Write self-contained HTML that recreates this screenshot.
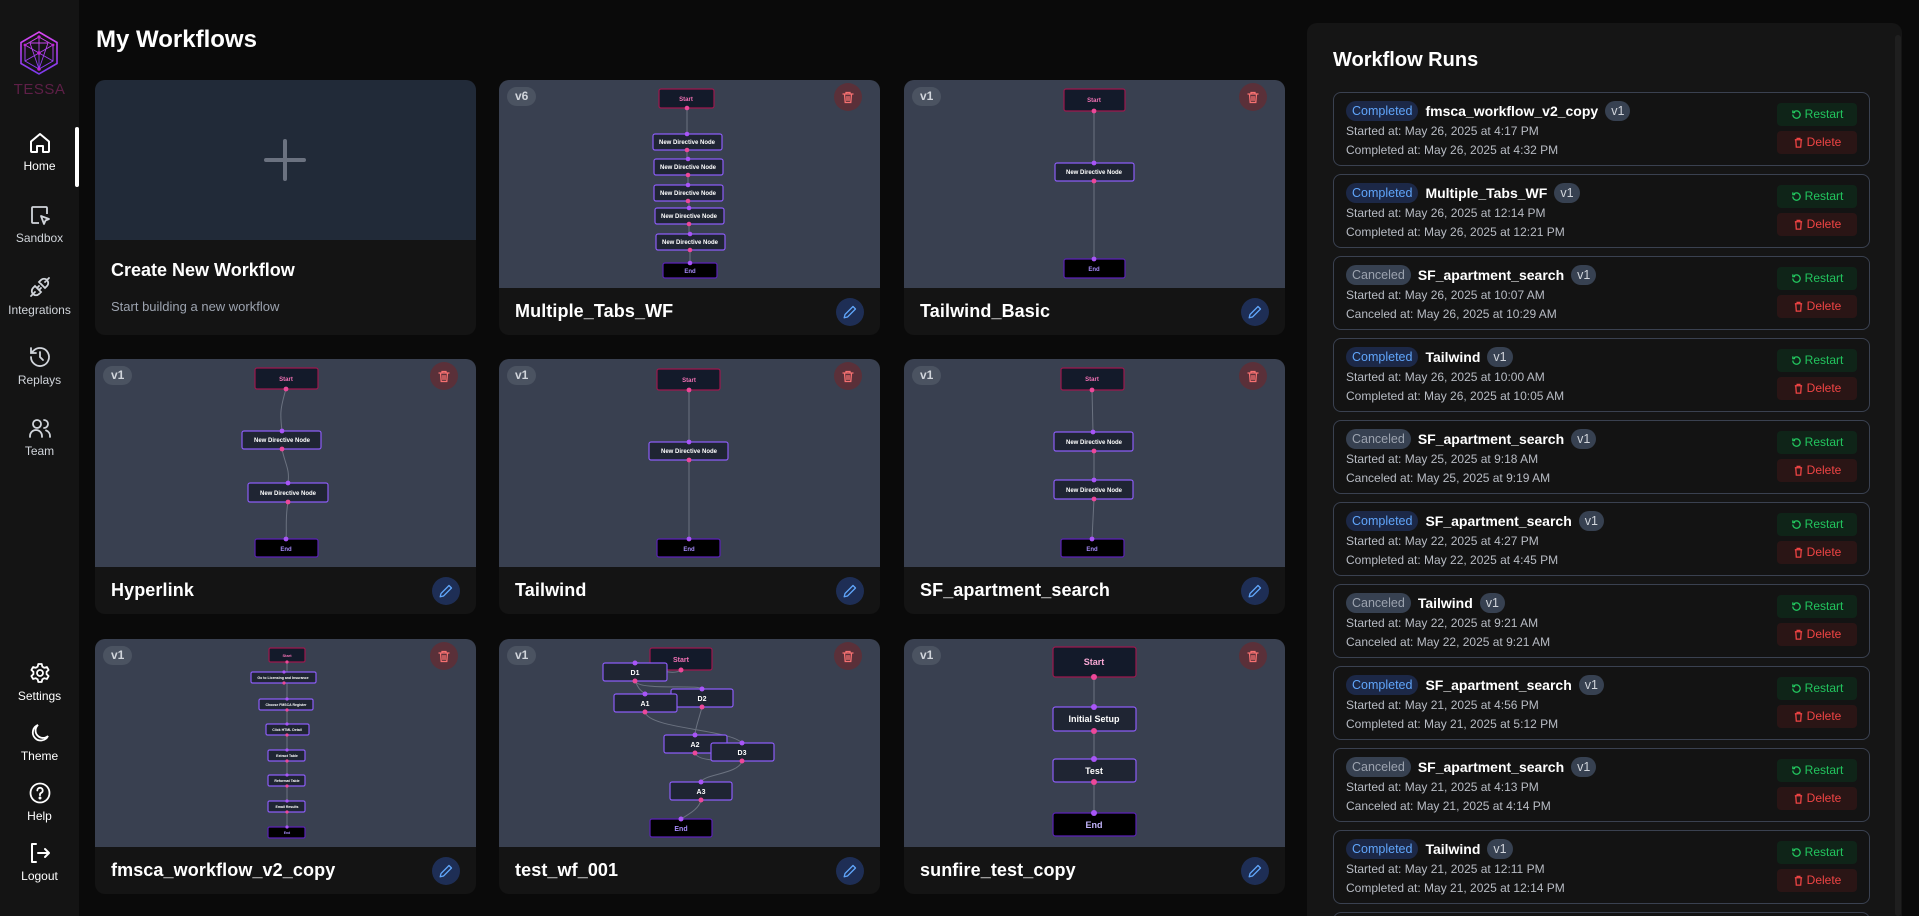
<!DOCTYPE html>
<html style="width:1919px;height:916px;overflow:hidden"><head><meta charset="utf-8">
<style>
*{box-sizing:border-box;margin:0;padding:0}
body{width:1919px;height:916px;overflow:hidden;background:#0a0a0a;font-family:"Liberation Sans",sans-serif;color:#fff;position:relative}
.side{position:absolute;left:0;top:0;width:79px;height:916px;background:#141414}
.nav{position:absolute;left:0;width:79px;text-align:center;font-size:12px;color:#d1d5db}
.nav svg{display:block;margin:0 auto 4px}
.bar{position:absolute;left:75px;top:127px;width:4px;height:60px;background:#fff;border-radius:2px}
h1{position:absolute;left:96px;top:26px;font-size:24px;font-weight:bold}
.card{position:absolute;width:381px;height:255px;border-radius:10px;background:#141414;overflow:hidden}
.pv{position:absolute;left:0;top:0;width:381px;height:208px;background:#394050}
.pv svg{position:absolute;left:0;top:0}
.ft{position:absolute;left:16px;top:221px;font-size:18px;font-weight:bold;letter-spacing:0.1px}
.ver{position:absolute;left:8px;top:7px;height:19px;padding:0 8px;border-radius:10px;background:#4b5361;color:#d1d5db;font-size:12px;font-weight:bold;line-height:19px}
.del{position:absolute;left:335px;top:3px;width:28px;height:28px;border-radius:50%;background:#5a3039}
.edit{position:absolute;left:337px;top:218px;width:28px;height:28px;border-radius:50%;background:#1e2e55}
.del svg,.edit svg{position:absolute;left:7px;top:7px}
.panel{position:absolute;left:1307px;top:23px;width:595px;height:893px;background:#151515;border-radius:10px 10px 0 0;overflow:hidden}
.sb{position:absolute;left:1895px;top:35px;width:6px;height:881px;background:#1f1f1f;border-radius:3px}
.panel h2{position:absolute;left:26px;top:26px;font-size:20px;font-weight:bold}
.run{position:absolute;left:26px;width:537px;height:74px;border:1px solid #3a4150;border-radius:8px;background:#131313}
.hd{position:absolute;left:12px;top:8px;height:20px;display:flex;align-items:center;gap:7px;white-space:nowrap}
.st{height:20px;line-height:20px;padding:0 6px;border-radius:10px;font-size:12.5px}
.cp{background:#1c2847;color:#60a5fa}
.cn{background:#374151;color:#9ca3af}
.nm{font-size:14px;font-weight:bold;color:#fff}
.v1{height:20px;line-height:20px;padding:0 6px;border-radius:10px;background:#374151;color:#d1d5db;font-size:12.5px}
.ln{position:absolute;left:12px;font-size:12px;color:#b8bcc4;white-space:nowrap}
.bt{position:absolute;left:443px;width:80px;height:23px;border-radius:4px;font-size:12px;line-height:23px;text-align:center}
.rs{top:10px;background:#0f2418;color:#22c55e}
.dl{top:38px;background:#2a1515;color:#ef4444}
.bt svg{vertical-align:-2px;margin-right:3px}
text{font-family:"Liberation Sans",sans-serif;font-weight:bold}
</style></head><body>
<div class="side">
 <svg style="position:absolute;left:18px;top:30px" width="42" height="46" viewBox="0 0 42 46">
  <defs><linearGradient id="lg" x1="0" y1="0" x2="0" y2="1"><stop offset="0" stop-color="#d946ef"/><stop offset="1" stop-color="#7c3aed"/></linearGradient></defs>
  <g fill="none" stroke="url(#lg)" stroke-width="1.6">
   <polygon points="21,2 39,12.5 39,33.5 21,44 3,33.5 3,12.5"/>
   <polygon points="21,7 35,15 35,31 21,39 7,31 7,15" stroke-width="1"/>
   <path d="M21,7 L21,23 M7,15 L21,23 L35,15 M7,31 L21,23 L35,31 M21,39 L21,23 M12,13 L30,13 M12,13 L21,39 M30,13 L21,39" stroke-width="0.9"/>
  </g>
  <g fill="#c026d3"><circle cx="21" cy="7" r="1.6"/><circle cx="21" cy="23" r="1.8"/><circle cx="21" cy="39" r="1.8"/><circle cx="7" cy="15" r="1.4"/><circle cx="35" cy="15" r="1.4"/></g>
 </svg>
 <div style="position:absolute;left:0;top:81px;width:79px;text-align:center;font-size:15px;color:#5e1f47;letter-spacing:0.5px">TESSA</div>
 <div class="bar"></div>
 <div class="nav" style="top:131px;color:#fff"><svg width="24" height="24" viewBox="0 0 24 24" fill="none" stroke="#fff" stroke-width="2" stroke-linejoin="round"><path d="M3 10.5L12 3l9 7.5V20a1 1 0 0 1-1 1h-5v-6h-6v6H4a1 1 0 0 1-1-1z"/></svg>Home</div>
 <div class="nav" style="top:203px"><svg width="24" height="24" viewBox="0 0 24 24" fill="none" stroke="#d1d5db" stroke-width="1.8" stroke-linejoin="round"><path d="M11 20H5a1 1 0 0 1-1-1V5a1 1 0 0 1 1-1h13a1 1 0 0 1 1 1v6"/><path d="M13 13l8 3-3.5 1.5L16 21z"/></svg>Sandbox</div>
 <div class="nav" style="top:275px"><svg width="24" height="24" viewBox="0 0 24 24" fill="none" stroke="#d1d5db" stroke-width="1.8" stroke-linecap="round"><path d="M3 21l4-4M21 3l-4 4M7 11l6 6-2 2a4 4 0 0 1-6-6zM17 13l-6-6 2-2a4 4 0 0 1 6 6zM9 13l2-2M11 15l2-2"/></svg>Integrations</div>
 <div class="nav" style="top:345px"><svg width="24" height="24" viewBox="0 0 24 24" fill="none" stroke="#d1d5db" stroke-width="1.8" stroke-linecap="round"><path d="M3 12a9 9 0 1 0 3-6.7L3 8M3 3v5h5M12 7v5l3 3"/></svg>Replays</div>
 <div class="nav" style="top:416px"><svg width="24" height="24" viewBox="0 0 24 24" fill="none" stroke="#d1d5db" stroke-width="1.8" stroke-linecap="round"><circle cx="9" cy="8" r="4"/><path d="M2 21v-1a6 6 0 0 1 12 0v1M16 4a4 4 0 0 1 0 8M22 21v-1a6 6 0 0 0-4-5.6"/></svg>Team</div>
 <div class="nav" style="top:661px;color:#fff"><svg width="24" height="24" viewBox="0 0 24 24" fill="none" stroke="#fff" stroke-width="1.8" stroke-linejoin="round"><circle cx="12" cy="12" r="3"/><path d="M10.3 3h3.4l.6 2.6 2 1.2 2.6-.8 1.7 3-2 1.8v2.4l2 1.8-1.7 3-2.6-.8-2 1.2-.6 2.6h-3.4l-.6-2.6-2-1.2-2.6.8-1.7-3 2-1.8v-2.4l-2-1.8 1.7-3 2.6.8 2-1.2z"/></svg>Settings</div>
 <div class="nav" style="top:721px;color:#fff"><svg width="24" height="24" viewBox="0 0 24 24" fill="none" stroke="#fff" stroke-width="1.8"><path d="M20 15A8 8 0 1 1 10 4a7 7 0 0 0 10 11z"/></svg>Theme</div>
 <div class="nav" style="top:781px;color:#fff"><svg width="24" height="24" viewBox="0 0 24 24" fill="none" stroke="#fff" stroke-width="1.8" stroke-linecap="round"><circle cx="12" cy="12" r="9.5"/><path d="M9.3 9.5a2.7 2.7 0 1 1 3.7 2.5c-.7.3-1 .9-1 1.6v.6"/><circle cx="12" cy="17" r=".6" fill="#fff"/></svg>Help</div>
 <div class="nav" style="top:841px;color:#fff"><svg width="24" height="24" viewBox="0 0 24 24" fill="none" stroke="#fff" stroke-width="2" stroke-linecap="round" stroke-linejoin="round"><path d="M8 3H4v18h4M10 12h11M17 8l4 4-4 4"/></svg>Logout</div>
</div>

<h1>My Workflows</h1>

<div class="card" style="left:95px;top:80px">
 <div class="pv" style="height:160px;background:#212a38"></div>
 <svg style="position:absolute;left:169px;top:59px" width="42" height="42"><path d="M21 2v38M2 21h38" stroke="#6b7280" stroke-width="4" stroke-linecap="round"/></svg>
 <div style="position:absolute;left:16px;top:180px;font-size:18px;font-weight:bold">Create New Workflow</div>
 <div style="position:absolute;left:16px;top:219px;font-size:13px;color:#9ca3af">Start building a new workflow</div>
</div>

<svg width="0" height="0" style="position:absolute"><defs>
<style>.s{fill:#131a2a;stroke:#9d174d;stroke-width:1.2}.d{fill:#1f2533;stroke:#8b5cf6;stroke-width:1.2}.e{fill:#000;stroke:#5b21b6;stroke-width:1.2}.ed{stroke:#6b7280;stroke-width:1;fill:none}.hp{fill:#ec4899}.hu{fill:#a855f7}.t{fill:#fff;font-size:6px}.ts{fill:#f472b6;font-size:6px}.te{fill:#a78bfa;font-size:6px}</style>
<g id="tr"><path d="M2 4h10M5 4V2.5h4V4M3.5 4l.7 8.5h5.6l.7-8.5M6 6.5v4M8 6.5v4" fill="none" stroke="#f87171" stroke-width="1.3" stroke-linecap="round"/></g>
<g id="pn"><path d="M10 1.5l2.5 2.5-8 8-3.3.8.8-3.3z" fill="none" stroke="#60a5fa" stroke-width="1.3" stroke-linejoin="round"/></g>
</defs></svg>

<div class="card" style="left:499px;top:80px"><div class="pv"><svg width="381" height="208">
<path class="ed" d="M188 28L188 54M188 70V79M189 95V105M190 121V128M190 144V154M191 170V183"/>
<rect class="s" x="160" y="9" width="55" height="19" rx="2"/><text class="ts" x="187" y="21" text-anchor="middle">Start</text>
<rect class="d" x="154" y="54" width="69" height="16" rx="2"/><text class="t" x="188" y="64" text-anchor="middle">New Directive Node</text>
<rect class="d" x="155" y="79" width="69" height="16" rx="2"/><text class="t" x="189" y="89" text-anchor="middle">New Directive Node</text>
<rect class="d" x="155" y="105" width="69" height="16" rx="2"/><text class="t" x="189" y="115" text-anchor="middle">New Directive Node</text>
<rect class="d" x="156" y="128" width="69" height="16" rx="2"/><text class="t" x="190" y="138" text-anchor="middle">New Directive Node</text>
<rect class="d" x="157" y="154" width="69" height="16" rx="2"/><text class="t" x="191" y="164" text-anchor="middle">New Directive Node</text>
<rect class="e" x="164" y="183" width="54" height="15" rx="2"/><text class="te" x="191" y="193" text-anchor="middle">End</text>
<g class="hp"><circle cx="188" cy="28" r="2.3"/><circle cx="188" cy="70" r="2.3"/><circle cx="189" cy="95" r="2.3"/><circle cx="189" cy="121" r="2.3"/><circle cx="190" cy="144" r="2.3"/><circle cx="191" cy="170" r="2.3"/></g>
<g class="hu"><circle cx="188" cy="54" r="2.3"/><circle cx="189" cy="79" r="2.3"/><circle cx="189" cy="105" r="2.3"/><circle cx="190" cy="128" r="2.3"/><circle cx="191" cy="154" r="2.3"/><circle cx="191" cy="183" r="2.3"/></g>
</svg><div class="ver">v6</div><div class="del"><svg width="14" height="14"><use href="#tr"/></svg></div></div>
<div class="ft">Multiple_Tabs_WF</div><div class="edit"><svg width="14" height="14"><use href="#pn"/></svg></div></div>

<div class="card" style="left:904px;top:80px"><div class="pv"><svg width="381" height="208">
<path class="ed" d="M190 31V83M190 101V179"/>
<rect class="s" x="160" y="9" width="61" height="22" rx="2"/><text class="ts" x="190" y="22" text-anchor="middle">Start</text>
<rect class="d" x="151" y="83" width="79" height="18" rx="2"/><text class="t" x="190" y="94" text-anchor="middle">New Directive Node</text>
<rect class="e" x="160" y="179" width="61" height="19" rx="2"/><text class="te" x="190" y="191" text-anchor="middle">End</text>
<g class="hp"><circle cx="190" cy="31" r="2.4"/><circle cx="190" cy="101" r="2.4"/></g><g class="hu"><circle cx="190" cy="83" r="2.4"/><circle cx="190" cy="179" r="2.4"/></g>
</svg><div class="ver">v1</div><div class="del"><svg width="14" height="14"><use href="#tr"/></svg></div></div>
<div class="ft">Tailwind_Basic</div><div class="edit"><svg width="14" height="14"><use href="#pn"/></svg></div></div>

<div class="card" style="left:95px;top:359px"><div class="pv"><svg width="381" height="208">
<path class="ed" d="M191 30C185 50 185 55 187 72M187 90C190 105 195 110 193 124M193 143C190 160 192 170 191 180"/>
<rect class="s" x="160" y="9" width="63" height="21" rx="2"/><text class="ts" x="191" y="22" text-anchor="middle">Start</text>
<rect class="d" x="147" y="72" width="79" height="18" rx="2"/><text class="t" x="187" y="83" text-anchor="middle">New Directive Node</text>
<rect class="d" x="153" y="124" width="80" height="19" rx="2"/><text class="t" x="193" y="136" text-anchor="middle">New Directive Node</text>
<rect class="e" x="160" y="180" width="63" height="18" rx="2"/><text class="te" x="191" y="192" text-anchor="middle">End</text>
<g class="hp"><circle cx="191" cy="30" r="2.4"/><circle cx="187" cy="90" r="2.4"/><circle cx="193" cy="143" r="2.4"/></g><g class="hu"><circle cx="187" cy="72" r="2.4"/><circle cx="193" cy="124" r="2.4"/><circle cx="191" cy="180" r="2.4"/></g>
</svg><div class="ver">v1</div><div class="del"><svg width="14" height="14"><use href="#tr"/></svg></div></div>
<div class="ft">Hyperlink</div><div class="edit"><svg width="14" height="14"><use href="#pn"/></svg></div></div>

<div class="card" style="left:499px;top:359px"><div class="pv"><svg width="381" height="208">
<path class="ed" d="M190 31V83M190 101V180"/>
<rect class="s" x="158" y="10" width="63" height="21" rx="2"/><text class="ts" x="190" y="23" text-anchor="middle">Start</text>
<rect class="d" x="150" y="83" width="79" height="18" rx="2"/><text class="t" x="190" y="94" text-anchor="middle">New Directive Node</text>
<rect class="e" x="158" y="180" width="63" height="18" rx="2"/><text class="te" x="190" y="192" text-anchor="middle">End</text>
<g class="hp"><circle cx="190" cy="31" r="2.4"/><circle cx="190" cy="101" r="2.4"/></g><g class="hu"><circle cx="190" cy="83" r="2.4"/><circle cx="190" cy="180" r="2.4"/></g>
</svg><div class="ver">v1</div><div class="del"><svg width="14" height="14"><use href="#tr"/></svg></div></div>
<div class="ft">Tailwind</div><div class="edit"><svg width="14" height="14"><use href="#pn"/></svg></div></div>

<div class="card" style="left:904px;top:359px"><div class="pv"><svg width="381" height="208">
<path class="ed" d="M188 31L189 73M190 92V121M190 140L188 180"/>
<rect class="s" x="157" y="9" width="63" height="22" rx="2"/><text class="ts" x="188" y="22" text-anchor="middle">Start</text>
<rect class="d" x="150" y="73" width="79" height="19" rx="2"/><text class="t" x="190" y="85" text-anchor="middle">New Directive Node</text>
<rect class="d" x="150" y="121" width="79" height="19" rx="2"/><text class="t" x="190" y="133" text-anchor="middle">New Directive Node</text>
<rect class="e" x="157" y="180" width="63" height="18" rx="2"/><text class="te" x="188" y="192" text-anchor="middle">End</text>
<g class="hp"><circle cx="188" cy="31" r="2.4"/><circle cx="190" cy="92" r="2.4"/><circle cx="190" cy="140" r="2.4"/></g><g class="hu"><circle cx="189" cy="73" r="2.4"/><circle cx="190" cy="121" r="2.4"/><circle cx="188" cy="180" r="2.4"/></g>
</svg><div class="ver">v1</div><div class="del"><svg width="14" height="14"><use href="#tr"/></svg></div></div>
<div class="ft">SF_apartment_search</div><div class="edit"><svg width="14" height="14"><use href="#pn"/></svg></div></div>

<div class="card" style="left:95px;top:639px"><div class="pv"><svg width="381" height="208">
<path class="ed" d="M192 23V188"/>
<rect class="s" x="174" y="9" width="36" height="14" rx="1.5"/><text class="ts" x="192" y="18" text-anchor="middle" style="font-size:4px">Start</text>
<rect class="d" x="156" y="33" width="65" height="11" rx="1.5"/><text class="t" x="188" y="40" text-anchor="middle" style="font-size:3.5px">Go to Licensing and Insurance</text>
<rect class="d" x="164" y="60" width="54" height="11" rx="1.5"/><text class="t" x="191" y="67" text-anchor="middle" style="font-size:3.5px">Choose FMSCA Register</text>
<rect class="d" x="171" y="85" width="43" height="11" rx="1.5"/><text class="t" x="192" y="92" text-anchor="middle" style="font-size:3.5px">Click HTML Detail</text>
<rect class="d" x="173" y="111" width="37" height="11" rx="1.5"/><text class="t" x="192" y="118" text-anchor="middle" style="font-size:3.5px">Extract Table</text>
<rect class="d" x="173" y="136" width="37" height="11" rx="1.5"/><text class="t" x="192" y="143" text-anchor="middle" style="font-size:3.5px">Reformat Table</text>
<rect class="d" x="173" y="162" width="37" height="11" rx="1.5"/><text class="t" x="192" y="169" text-anchor="middle" style="font-size:3.5px">Email Results</text>
<rect class="e" x="173" y="188" width="37" height="11" rx="1.5"/><text class="te" x="192" y="195" text-anchor="middle" style="font-size:3.5px">End</text>
<g class="hp"><circle cx="192" cy="23" r="1.6"/><circle cx="189" cy="44" r="1.6"/><circle cx="192" cy="71" r="1.6"/><circle cx="192" cy="96" r="1.6"/><circle cx="192" cy="122" r="1.6"/><circle cx="192" cy="147" r="1.6"/><circle cx="192" cy="173" r="1.6"/></g>
<g class="hu"><circle cx="189" cy="33" r="1.6"/><circle cx="192" cy="60" r="1.6"/><circle cx="192" cy="85" r="1.6"/><circle cx="192" cy="111" r="1.6"/><circle cx="192" cy="136" r="1.6"/><circle cx="192" cy="162" r="1.6"/><circle cx="192" cy="188" r="1.6"/></g>
</svg><div class="ver">v1</div><div class="del"><svg width="14" height="14"><use href="#tr"/></svg></div></div>
<div class="ft">fmsca_workflow_v2_copy</div><div class="edit"><svg width="14" height="14"><use href="#pn"/></svg></div></div>

<div class="card" style="left:499px;top:639px"><div class="pv"><svg width="381" height="208">
<path class="ed" d="M182 31C170 40 140 20 136 24M136 42C140 52 200 45 203 50M136 42C140 50 140 50 146 55M146 73C150 90 230 90 243 104M203 68C200 80 196 90 196 96M196 114C200 125 240 120 243 122M243 122C240 135 205 135 202 143M202 161C200 170 190 175 182 180"/>
<rect class="s" x="151" y="9" width="62" height="22" rx="2"/><text class="ts" x="182" y="23" text-anchor="middle" style="font-size:7px">Start</text>
<rect class="d" x="104" y="24" width="64" height="18" rx="2"/><text class="t" x="136" y="36" text-anchor="middle" style="font-size:7px">D1</text>
<rect class="d" x="172" y="50" width="62" height="18" rx="2"/><text class="t" x="203" y="62" text-anchor="middle" style="font-size:7px">D2</text>
<rect class="d" x="115" y="55" width="63" height="18" rx="2"/><text class="t" x="146" y="67" text-anchor="middle" style="font-size:7px">A1</text>
<rect class="d" x="165" y="96" width="63" height="18" rx="2"/><text class="t" x="196" y="108" text-anchor="middle" style="font-size:7px">A2</text>
<rect class="d" x="212" y="104" width="63" height="18" rx="2"/><text class="t" x="243" y="116" text-anchor="middle" style="font-size:7px">D3</text>
<rect class="d" x="171" y="143" width="62" height="18" rx="2"/><text class="t" x="202" y="155" text-anchor="middle" style="font-size:7px">A3</text>
<rect class="e" x="151" y="180" width="62" height="18" rx="2"/><text class="te" x="182" y="192" text-anchor="middle" style="font-size:7px">End</text>
<g class="hp"><circle cx="182" cy="31" r="2.5"/><circle cx="136" cy="42" r="2.5"/><circle cx="203" cy="68" r="2.5"/><circle cx="146" cy="73" r="2.5"/><circle cx="196" cy="114" r="2.5"/><circle cx="243" cy="122" r="2.5"/><circle cx="202" cy="161" r="2.5"/></g>
<g class="hu"><circle cx="136" cy="24" r="2.5"/><circle cx="203" cy="50" r="2.5"/><circle cx="146" cy="55" r="2.5"/><circle cx="196" cy="96" r="2.5"/><circle cx="243" cy="104" r="2.5"/><circle cx="202" cy="143" r="2.5"/><circle cx="182" cy="180" r="2.5"/></g>
</svg><div class="ver">v1</div><div class="del"><svg width="14" height="14"><use href="#tr"/></svg></div></div>
<div class="ft">test_wf_001</div><div class="edit"><svg width="14" height="14"><use href="#pn"/></svg></div></div>

<div class="card" style="left:904px;top:639px"><div class="pv"><svg width="381" height="208">
<path class="ed" d="M190 38V68M190 92V120M190 143V174"/>
<rect class="s" x="149" y="8" width="83" height="30" rx="2.5"/><text class="ts" x="190" y="26" text-anchor="middle" style="font-size:9px;fill:#f9a8d4">Start</text>
<rect class="d" x="149" y="68" width="83" height="24" rx="2.5"/><text class="t" x="190" y="83" text-anchor="middle" style="font-size:9px">Initial Setup</text>
<rect class="d" x="149" y="120" width="83" height="23" rx="2.5"/><text class="t" x="190" y="135" text-anchor="middle" style="font-size:9px">Test</text>
<rect class="e" x="149" y="174" width="83" height="23" rx="2.5"/><text class="te" x="190" y="189" text-anchor="middle" style="font-size:9px;fill:#c4b5fd">End</text>
<g class="hp"><circle cx="190" cy="38" r="3"/><circle cx="190" cy="92" r="3"/><circle cx="190" cy="143" r="3"/></g><g class="hu"><circle cx="190" cy="68" r="3"/><circle cx="190" cy="120" r="3"/><circle cx="190" cy="174" r="3"/></g>
</svg><div class="ver">v1</div><div class="del"><svg width="14" height="14"><use href="#tr"/></svg></div></div>
<div class="ft">sunfire_test_copy</div><div class="edit"><svg width="14" height="14"><use href="#pn"/></svg></div></div>

<div class="panel">
<h2>Workflow Runs</h2>

<div class="run" style="top:69px"><div class="hd"><span class="st cp">Completed</span><span class="nm">fmsca_workflow_v2_copy</span><span class="v1">v1</span></div><div class="ln" style="top:31px">Started at: May 26, 2025 at 4:17 PM</div><div class="ln" style="top:50px">Completed at: May 26, 2025 at 4:32 PM</div><div class="bt rs"><svg width="11" height="11" viewBox="0 0 12 12"><path d="M2 6a4 4 0 1 0 1.2-2.8M2 1.5v2.5h2.5" fill="none" stroke="#22c55e" stroke-width="1.4"/></svg>Restart</div><div class="bt dl"><svg width="11" height="11" viewBox="0 0 12 12"><path d="M2 3h8M4.5 3V1.5h3V3M3 3l.6 8h4.8L9 3" fill="none" stroke="#ef4444" stroke-width="1.4"/></svg>Delete</div></div>

<div class="run" style="top:151px"><div class="hd"><span class="st cp">Completed</span><span class="nm">Multiple_Tabs_WF</span><span class="v1">v1</span></div><div class="ln" style="top:31px">Started at: May 26, 2025 at 12:14 PM</div><div class="ln" style="top:50px">Completed at: May 26, 2025 at 12:21 PM</div><div class="bt rs"><svg width="11" height="11" viewBox="0 0 12 12"><path d="M2 6a4 4 0 1 0 1.2-2.8M2 1.5v2.5h2.5" fill="none" stroke="#22c55e" stroke-width="1.4"/></svg>Restart</div><div class="bt dl"><svg width="11" height="11" viewBox="0 0 12 12"><path d="M2 3h8M4.5 3V1.5h3V3M3 3l.6 8h4.8L9 3" fill="none" stroke="#ef4444" stroke-width="1.4"/></svg>Delete</div></div>

<div class="run" style="top:233px"><div class="hd"><span class="st cn">Canceled</span><span class="nm">SF_apartment_search</span><span class="v1">v1</span></div><div class="ln" style="top:31px">Started at: May 26, 2025 at 10:07 AM</div><div class="ln" style="top:50px">Canceled at: May 26, 2025 at 10:29 AM</div><div class="bt rs"><svg width="11" height="11" viewBox="0 0 12 12"><path d="M2 6a4 4 0 1 0 1.2-2.8M2 1.5v2.5h2.5" fill="none" stroke="#22c55e" stroke-width="1.4"/></svg>Restart</div><div class="bt dl"><svg width="11" height="11" viewBox="0 0 12 12"><path d="M2 3h8M4.5 3V1.5h3V3M3 3l.6 8h4.8L9 3" fill="none" stroke="#ef4444" stroke-width="1.4"/></svg>Delete</div></div>

<div class="run" style="top:315px"><div class="hd"><span class="st cp">Completed</span><span class="nm">Tailwind</span><span class="v1">v1</span></div><div class="ln" style="top:31px">Started at: May 26, 2025 at 10:00 AM</div><div class="ln" style="top:50px">Completed at: May 26, 2025 at 10:05 AM</div><div class="bt rs"><svg width="11" height="11" viewBox="0 0 12 12"><path d="M2 6a4 4 0 1 0 1.2-2.8M2 1.5v2.5h2.5" fill="none" stroke="#22c55e" stroke-width="1.4"/></svg>Restart</div><div class="bt dl"><svg width="11" height="11" viewBox="0 0 12 12"><path d="M2 3h8M4.5 3V1.5h3V3M3 3l.6 8h4.8L9 3" fill="none" stroke="#ef4444" stroke-width="1.4"/></svg>Delete</div></div>

<div class="run" style="top:397px"><div class="hd"><span class="st cn">Canceled</span><span class="nm">SF_apartment_search</span><span class="v1">v1</span></div><div class="ln" style="top:31px">Started at: May 25, 2025 at 9:18 AM</div><div class="ln" style="top:50px">Canceled at: May 25, 2025 at 9:19 AM</div><div class="bt rs"><svg width="11" height="11" viewBox="0 0 12 12"><path d="M2 6a4 4 0 1 0 1.2-2.8M2 1.5v2.5h2.5" fill="none" stroke="#22c55e" stroke-width="1.4"/></svg>Restart</div><div class="bt dl"><svg width="11" height="11" viewBox="0 0 12 12"><path d="M2 3h8M4.5 3V1.5h3V3M3 3l.6 8h4.8L9 3" fill="none" stroke="#ef4444" stroke-width="1.4"/></svg>Delete</div></div>

<div class="run" style="top:479px"><div class="hd"><span class="st cp">Completed</span><span class="nm">SF_apartment_search</span><span class="v1">v1</span></div><div class="ln" style="top:31px">Started at: May 22, 2025 at 4:27 PM</div><div class="ln" style="top:50px">Completed at: May 22, 2025 at 4:45 PM</div><div class="bt rs"><svg width="11" height="11" viewBox="0 0 12 12"><path d="M2 6a4 4 0 1 0 1.2-2.8M2 1.5v2.5h2.5" fill="none" stroke="#22c55e" stroke-width="1.4"/></svg>Restart</div><div class="bt dl"><svg width="11" height="11" viewBox="0 0 12 12"><path d="M2 3h8M4.5 3V1.5h3V3M3 3l.6 8h4.8L9 3" fill="none" stroke="#ef4444" stroke-width="1.4"/></svg>Delete</div></div>

<div class="run" style="top:561px"><div class="hd"><span class="st cn">Canceled</span><span class="nm">Tailwind</span><span class="v1">v1</span></div><div class="ln" style="top:31px">Started at: May 22, 2025 at 9:21 AM</div><div class="ln" style="top:50px">Canceled at: May 22, 2025 at 9:21 AM</div><div class="bt rs"><svg width="11" height="11" viewBox="0 0 12 12"><path d="M2 6a4 4 0 1 0 1.2-2.8M2 1.5v2.5h2.5" fill="none" stroke="#22c55e" stroke-width="1.4"/></svg>Restart</div><div class="bt dl"><svg width="11" height="11" viewBox="0 0 12 12"><path d="M2 3h8M4.5 3V1.5h3V3M3 3l.6 8h4.8L9 3" fill="none" stroke="#ef4444" stroke-width="1.4"/></svg>Delete</div></div>

<div class="run" style="top:643px"><div class="hd"><span class="st cp">Completed</span><span class="nm">SF_apartment_search</span><span class="v1">v1</span></div><div class="ln" style="top:31px">Started at: May 21, 2025 at 4:56 PM</div><div class="ln" style="top:50px">Completed at: May 21, 2025 at 5:12 PM</div><div class="bt rs"><svg width="11" height="11" viewBox="0 0 12 12"><path d="M2 6a4 4 0 1 0 1.2-2.8M2 1.5v2.5h2.5" fill="none" stroke="#22c55e" stroke-width="1.4"/></svg>Restart</div><div class="bt dl"><svg width="11" height="11" viewBox="0 0 12 12"><path d="M2 3h8M4.5 3V1.5h3V3M3 3l.6 8h4.8L9 3" fill="none" stroke="#ef4444" stroke-width="1.4"/></svg>Delete</div></div>

<div class="run" style="top:725px"><div class="hd"><span class="st cn">Canceled</span><span class="nm">SF_apartment_search</span><span class="v1">v1</span></div><div class="ln" style="top:31px">Started at: May 21, 2025 at 4:13 PM</div><div class="ln" style="top:50px">Canceled at: May 21, 2025 at 4:14 PM</div><div class="bt rs"><svg width="11" height="11" viewBox="0 0 12 12"><path d="M2 6a4 4 0 1 0 1.2-2.8M2 1.5v2.5h2.5" fill="none" stroke="#22c55e" stroke-width="1.4"/></svg>Restart</div><div class="bt dl"><svg width="11" height="11" viewBox="0 0 12 12"><path d="M2 3h8M4.5 3V1.5h3V3M3 3l.6 8h4.8L9 3" fill="none" stroke="#ef4444" stroke-width="1.4"/></svg>Delete</div></div>

<div class="run" style="top:807px"><div class="hd"><span class="st cp">Completed</span><span class="nm">Tailwind</span><span class="v1">v1</span></div><div class="ln" style="top:31px">Started at: May 21, 2025 at 12:11 PM</div><div class="ln" style="top:50px">Completed at: May 21, 2025 at 12:14 PM</div><div class="bt rs"><svg width="11" height="11" viewBox="0 0 12 12"><path d="M2 6a4 4 0 1 0 1.2-2.8M2 1.5v2.5h2.5" fill="none" stroke="#22c55e" stroke-width="1.4"/></svg>Restart</div><div class="bt dl"><svg width="11" height="11" viewBox="0 0 12 12"><path d="M2 3h8M4.5 3V1.5h3V3M3 3l.6 8h4.8L9 3" fill="none" stroke="#ef4444" stroke-width="1.4"/></svg>Delete</div></div>

<div class="run" style="top:889px"></div>
</div>
<div class="sb"></div>
</body></html>
